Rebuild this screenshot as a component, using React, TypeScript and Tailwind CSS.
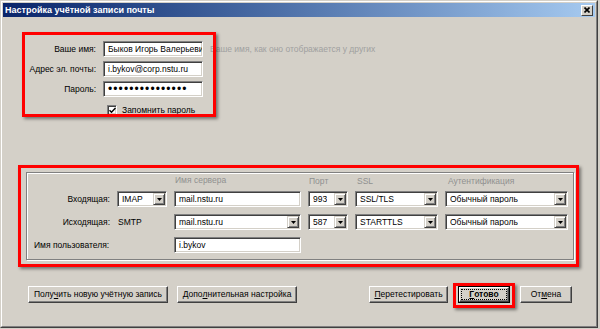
const font = { fontFamily: '"Liberation Sans", Arial, sans-serif' };

function Field({ children, className = '' }: { children?: React.ReactNode; className?: string }) {
  return (
    <div
      className={`h-[16px] bg-white border border-t-[#808080] border-l-[#808080] border-r-white border-b-white shadow-[inset_1px_1px_0_#404040,inset_-1px_-1px_0_#d4d0c8] flex items-center pl-[4px] overflow-hidden whitespace-nowrap text-black ${className}`}
    >
      {children}
    </div>
  );
}

function Arrow() {
  return (
    <div className="w-[12px] h-[12px] mr-[1px] ml-auto shrink-0 bg-[#d4d0c8] border border-t-[#d4d0c8] border-l-[#d4d0c8] border-r-[#404040] border-b-[#404040] shadow-[inset_1px_1px_0_white,inset_-1px_-1px_0_#808080] flex items-center justify-center">
      <svg width="5" height="3" viewBox="0 0 5 3">
        <path d="M0 0h5L2.5 3z" fill="black" />
      </svg>
    </div>
  );
}

function Select({ value, className = '' }: { value: string; className?: string }) {
  return (
    <Field className={className}>
      <span className="truncate">{value}</span>
      <Arrow />
    </Field>
  );
}

function Button({
  children,
  className = '',
  primary = false,
}: {
  children: React.ReactNode;
  className?: string;
  primary?: boolean;
}) {
  if (primary) {
    return (
      <div className={`h-[17px] border border-black ${className}`}>
        <div className="h-full bg-[#d4d0c8] border border-t-white border-l-white border-r-[#404040] border-b-[#404040] shadow-[inset_-1px_-1px_0_#808080] flex items-center justify-center p-[1px]">
          <div className="w-full h-full border border-dotted border-black flex items-center justify-center font-bold">
            {children}
          </div>
        </div>
      </div>
    );
  }
  return (
    <div
      className={`h-[17px] bg-[#d4d0c8] border border-t-white border-l-white border-r-[#404040] border-b-[#404040] shadow-[inset_-1px_-1px_0_#808080] flex items-center justify-center whitespace-nowrap ${className}`}
    >
      {children}
    </div>
  );
}

export default function App() {
  return (
    <div className="w-[600px] h-[329px] bg-[#d4d0c8] text-[8.5px] text-black leading-none" style={font}>
      <div className="relative w-[598px] h-[328px] border border-t-[#d4d0c8] border-l-[#d4d0c8] border-r-[#404040] border-b-[#404040]">
        <div className="h-full border border-t-white border-l-white border-r-[#808080] border-b-[#808080] p-px flex flex-col">
          {/* title bar */}
          <div className="h-[14px] shrink-0 bg-gradient-to-r from-[#0a246a] to-[#a6caf0] flex items-center pl-[2px] pr-[2px]">
            <span className="text-white font-bold text-[9px]">Настройка учётной записи почты</span>
            <div className="ml-auto w-[12px] h-[11px] bg-[#d4d0c8] border border-t-white border-l-white border-r-[#404040] border-b-[#404040] flex items-center justify-center">
              <svg width="6" height="6" viewBox="0 0 6 6">
                <path d="M0.5 0.5l5 5M5.5 0.5l-5 5" stroke="black" strokeWidth="1.6" />
              </svg>
            </div>
          </div>

          {/* account */}
          <div className="mt-[24px] flex flex-col gap-[4px]">
            <div className="flex items-center gap-[7px]">
              <span className="w-[93px] text-right">Ваше имя:</span>
              <Field className="w-[100px]">Быков Игорь Валерьевич</Field>
              <span className="text-[#a0a0a0] whitespace-nowrap">Ваше имя, как оно отображается у других</span>
            </div>
            <div className="flex items-center gap-[7px]">
              <span className="w-[93px] text-right">Адрес эл. почты:</span>
              <Field className="w-[100px]">i.bykov@corp.nstu.ru</Field>
            </div>
            <div className="flex items-center gap-[7px]">
              <span className="w-[93px] text-right">Пароль:</span>
              <Field className="w-[100px]">
                <span className="text-[12px] tracking-[1.1px]">•••••••••••••••</span>
              </Field>
            </div>
            <div className="flex items-center h-[12px] mt-[3px] pl-[104px] gap-[5px]">
              <div className="w-[10px] h-[10px] bg-white border border-t-[#808080] border-l-[#808080] border-r-white border-b-white shadow-[inset_1px_1px_0_#404040,inset_-1px_-1px_0_#d4d0c8] flex items-center justify-center">
                <svg width="7" height="7" viewBox="0 0 7 7">
                  <path d="M0.5 3.2l2 2 4-4.2" stroke="black" strokeWidth="1.5" fill="none" />
                </svg>
              </div>
              <span>
                Запо<span className="underline">м</span>нить пароль
              </span>
            </div>
          </div>

          {/* server group */}
          <div className="mt-[56px] ml-[23px] w-[548px] border border-[#808080] shadow-[inset_1px_1px_0_white,1px_1px_0_white] pt-[3px] pb-[6px] pl-[1px]">
            <div className="grid grid-cols-[82px_50px_127px_40px_83px_123px] gap-x-[7px] gap-y-[7px] items-center">
              <span className="col-start-3 text-[#909090] pl-[1px] h-[11px]">Имя сервера</span>
              <span className="text-[#909090] pl-[1px]">Порт</span>
              <span className="text-[#909090] pl-[2px]">SSL</span>
              <span className="text-[#909090] pl-[3px]">Аутентификация</span>

              <span className="col-start-1 text-right -mt-[3px]">Входящая:</span>
              <Select value="IMAP" className="-mt-[3px]" />
              <Field className="-mt-[3px]">mail.nstu.ru</Field>
              <Select value="993" className="-mt-[3px]" />
              <Select value="SSL/TLS" className="-mt-[3px]" />
              <Select value="Обычный пароль" className="-mt-[3px]" />

              <span className="col-start-1 text-right">Исходящая:</span>
              <span className="pl-[1px]">SMTP</span>
              <Select value="mail.nstu.ru" />
              <Select value="587" />
              <Select value="STARTTLS" />
              <Select value="Обычный пароль" />

              <span className="col-start-1 col-span-2 pl-[6px]">Имя пользователя:</span>
              <Field>i.bykov</Field>
            </div>
          </div>

          {/* buttons */}
          <div className="mt-[26px] flex items-center px-[25px]">
            <Button className="w-[140px]">
              Полу<span className="underline">ч</span>ить новую учётную запись
            </Button>
            <Button className="w-[120px] ml-[9px]">
              Допо<span className="underline">л</span>нительная настройка
            </Button>
            <Button className="w-[79px] ml-auto">
              <span className="underline">П</span>еретестировать
            </Button>
            <Button primary className="w-[52px] ml-[10px]">
              <span className="underline">Г</span>отово
            </Button>
            <Button className="w-[52px] ml-[10px] mr-[-2px]">
              От<span className="underline">м</span>ена
            </Button>
          </div>
        </div>

        {/* red annotation frames */}
        <div className="absolute left-[21px] top-[31px] w-[194px] h-[85px] border-[3px] border-[#ff0000] shadow-[2px_2px_3px_rgba(0,0,0,0.45)]" />
        <div className="absolute left-[17px] top-[164px] w-[561px] h-[102px] border-[3px] border-[#ff0000] shadow-[2px_2px_3px_rgba(0,0,0,0.45)]" />
        <div className="absolute left-[452px] top-[282px] w-[62px] h-[25px] border-[3px] border-[#ff0000] shadow-[2px_2px_3px_rgba(0,0,0,0.45)]" />
      </div>
    </div>
  );
}
